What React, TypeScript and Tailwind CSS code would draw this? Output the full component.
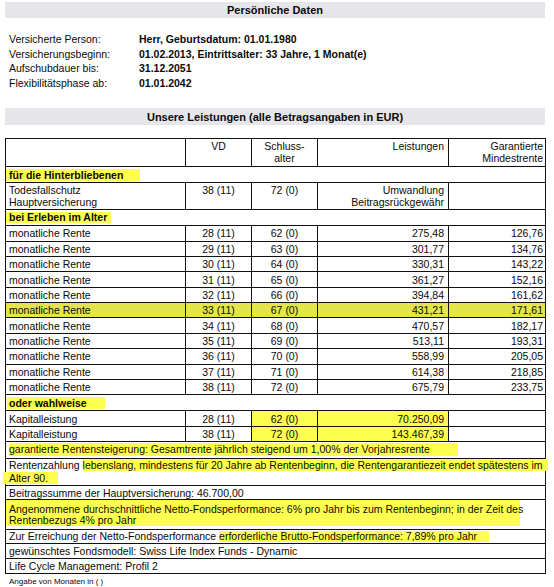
import React from "react";

const rows: [string, string, string, string][] = [
  ["28 (11)", "62 (0)", "275,48", "126,76"],
  ["29 (11)", "63 (0)", "301,77", "134,76"],
  ["30 (11)", "64 (0)", "330,31", "143,22"],
  ["31 (11)", "65 (0)", "361,27", "152,16"],
  ["32 (11)", "66 (0)", "394,84", "161,62"],
  ["33 (11)", "67 (0)", "431,21", "171,61"],
  ["34 (11)", "68 (0)", "470,57", "182,17"],
  ["35 (11)", "69 (0)", "513,11", "193,31"],
  ["36 (11)", "70 (0)", "558,99", "205,05"],
  ["37 (11)", "71 (0)", "614,38", "218,85"],
  ["38 (11)", "72 (0)", "675,79", "233,75"],
];

const td = "border border-[#111] p-0 align-middle";

export default function App() {
  return (
    <div className="w-[554px] h-[587px] bg-white text-[#0a0a0a] font-['Liberation_Sans',Arial,sans-serif] text-[10.5px] overflow-hidden">
      <div className="pl-[5px] pt-[2px]">
        <div className="w-[540px] h-[15.5px] bg-[#e5e5ea] flex items-center justify-center font-bold text-[11px]">
          Persönliche Daten
        </div>
        <div className="mt-[14.5px] pl-[4px] grid grid-cols-[130px_1fr] leading-[14.7px]">
          <div>Versicherte Person:</div>
          <div className="font-bold">Herr, Geburtsdatum: 01.01.1980</div>
          <div>Versicherungsbeginn:</div>
          <div className="font-bold">01.02.2013, Eintrittsalter: 33 Jahre, 1 Monat(e)</div>
          <div>Aufschubdauer bis:</div>
          <div className="font-bold">31.12.2051</div>
          <div>Flexibilitätsphase ab:</div>
          <div className="font-bold">01.01.2042</div>
        </div>
        <div className="mt-[17.5px] w-[540px] h-[17px] bg-[#e5e5ea] flex items-center justify-center font-bold text-[11px]">
          Unsere Leistungen (alle Betragsangaben in EUR)
        </div>
        <table className="mt-[13px] w-[540px] table-fixed border-collapse">
          <colgroup>
            <col className="w-[180px]" />
            <col className="w-[66px]" />
            <col className="w-[66px]" />
            <col className="w-[131px]" />
            <col className="w-[97px]" />
          </colgroup>
          <tbody>
            <tr className="h-[28px]">
              <td className={`${td} !align-top`}></td>
              <td className={`${td} !align-top text-center pt-[2px] leading-[11.7px]`}>VD</td>
              <td className={`${td} !align-top text-center pt-[2px] leading-[11.7px]`}>
                Schluss-
                <br />
                alter
              </td>
              <td className={`${td} !align-top text-right pr-[4px] pt-[2px] leading-[11.7px]`}>Leistungen</td>
              <td className={`${td} !align-top text-right pr-[2px] pt-[2px] leading-[11.7px]`}>
                Garantierte
                <br />
                Mindestrente
              </td>
            </tr>
            <tr className="h-[15.5px]">
              <td colSpan={5} className={td}>
                <div className="w-[134px] h-[12px] bg-[#ffff4f] pl-[3px] font-bold leading-[12px]">für die Hinterbliebenen</div>
              </td>
            </tr>
            <tr className="h-[27.5px]">
              <td className={`${td} !align-top pl-[3px] pt-[1px] leading-[12px]`}>
                Todesfallschutz
                <br />
                Hauptversicherung
              </td>
              <td className={`${td} !align-top text-center pt-[1px] leading-[12px]`}>38 (11)</td>
              <td className={`${td} !align-top text-center pt-[1px] leading-[12px]`}>72 (0)</td>
              <td className={`${td} !align-top text-right pr-[4px] pt-[1px] leading-[12px]`}>
                Umwandlung
                <br />
                Beitragsrückgewähr
              </td>
              <td className={td}></td>
            </tr>
            <tr className="h-[16px]">
              <td colSpan={5} className={td}>
                <div className="w-[105px] h-[11px] bg-[#ffff4f] pl-[3px] font-bold leading-[11px]">bei Erleben im Alter</div>
              </td>
            </tr>
            {rows.map((r, i) => {
              const hl = i === 5 ? " bg-[#e4e54a]" : "";
              return (
                <tr key={i} className="h-[15.36px] leading-[12px]">
                  <td className={`${td} pl-[3px]${hl}`}>monatliche Rente</td>
                  <td className={`${td} text-center${hl}`}>{r[0]}</td>
                  <td className={`${td} text-center${hl}`}>{r[1]}</td>
                  <td className={`${td} text-right pr-[4px]${hl}`}>{r[2]}</td>
                  <td className={`${td} text-right pr-[2px]${hl}`}>{r[3]}</td>
                </tr>
              );
            })}
            <tr className="h-[16px]">
              <td colSpan={5} className={td}>
                <div className="ml-[1px] w-[98px] h-[12px] bg-[#ffff4f] pl-[2px] font-bold leading-[12px]">oder wahlweise</div>
              </td>
            </tr>
            <tr className="h-[15.5px] leading-[12px]">
              <td className={`${td} pl-[3px]`}>Kapitalleistung</td>
              <td className={`${td} text-center`}>28 (11)</td>
              <td className={`${td} text-center bg-[#ffff4f]`}>62 (0)</td>
              <td className={`${td} text-right pr-[4px] bg-[#ffff4f]`}>70.250,09</td>
              <td className={td}></td>
            </tr>
            <tr className="h-[15px] leading-[12px]">
              <td className={`${td} pl-[3px]`}>Kapitalleistung</td>
              <td className={`${td} text-center`}>38 (11)</td>
              <td className={`${td} text-center bg-[#ffff4f]`}>72 (0)</td>
              <td className={`${td} text-right pr-[4px] bg-[#ffff4f]`}>143.467,39</td>
              <td className={td}></td>
            </tr>
            <tr className="h-[15px]">
              <td colSpan={5} className={`${td} pl-[3px]`}>
                <span className="inline-block bg-[#ffff4f] pr-[28px] leading-[13px] whitespace-nowrap">
                  garantierte Rentensteigerung: Gesamtrente jährlich steigend um 1,00% der Vorjahresrente
                </span>
              </td>
            </tr>
            <tr className="h-[27.5px]">
              <td colSpan={5} className={`${td} pl-[3px] leading-[13.3px] whitespace-nowrap`}>
                Rentenzahlung{" "}
                <span className="bg-[#ffff4f] pr-[5px]">
                  lebenslang, mindestens für 20 Jahre ab Rentenbeginn, die Rentengarantiezeit endet spätestens im
                </span>
                <br />
                <span className="bg-[#ffff4f] -ml-[6px] pl-[6px] pr-[10px]">Alter 90.</span>
              </td>
            </tr>
            <tr className="h-[14px] leading-[12px]">
              <td colSpan={5} className={`${td} pl-[3px]`}>Beitragssumme der Hauptversicherung: 46.700,00</td>
            </tr>
            <tr className="h-[29.5px]">
              <td colSpan={5} className={`${td} !align-top`}>
                <div className="w-[514px] bg-[#ffff4f] pl-[3px] pt-[4px] pb-[1px] leading-[10.5px] whitespace-nowrap">
                  Angenommene durchschnittliche Netto-Fondsperformance: 6% pro Jahr bis zum Rentenbeginn; in der Zeit des
                  <br />
                  Rentenbezugs 4% pro Jahr
                </div>
              </td>
            </tr>
            <tr className="h-[14px] leading-[11px]">
              <td colSpan={5} className={`${td} pl-[3px] whitespace-nowrap`}>
                Zur Erreichung der Netto-Fondsperformance{" "}
                <span className="inline-block bg-[#ffff4f] pr-[12px]">erforderliche Brutto-Fondsperformance: 7,89% pro Jahr</span>
              </td>
            </tr>
            <tr className="h-[15px] leading-[12px]">
              <td colSpan={5} className={`${td} pl-[3px]`}>gewünschtes Fondsmodell: Swiss Life Index Funds - Dynamic</td>
            </tr>
            <tr className="h-[15px] leading-[12px]">
              <td colSpan={5} className={`${td} pl-[3px]`}>Life Cycle Management: Profil 2</td>
            </tr>
          </tbody>
        </table>
        <div className="pl-[4px] mt-[3px] text-[8px] leading-[10px]">Angabe von Monaten in ( )</div>
      </div>
    </div>
  );
}
